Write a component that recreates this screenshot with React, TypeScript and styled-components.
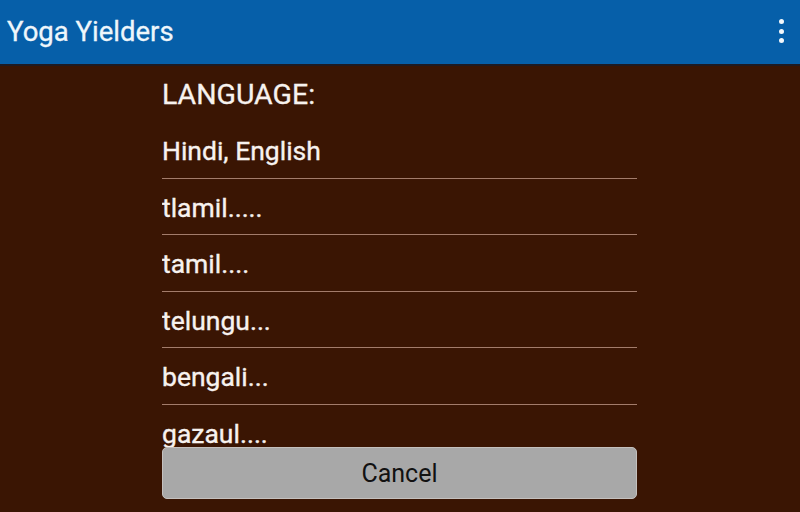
import styled, { createGlobalStyle } from "styled-components";

const languages = [
  "Hindi, English",
  "tlamil.....",
  "tamil....",
  "telungu...",
  "bengali...",
  "gazaul....",
];

const GlobalStyle = createGlobalStyle`
  html, body {
    margin: 0;
    padding: 0;
    background: #3a1503;
    font-family: Roboto, "Noto Sans", sans-serif;
  }
`;

const Screen = styled.div`
  width: 800px;
  height: 512px;
  display: flex;
  flex-direction: column;
  background: #3a1503;
  overflow: hidden;
`;

const AppBar = styled.header`
  height: 64px;
  flex-shrink: 0;
  background: #065fa9;
  box-shadow: 0 2px 0 #1e1a22;
  display: flex;
  align-items: center;
  justify-content: space-between;
  padding: 0 16px 0 7px;
  position: relative;
  z-index: 1;
`;

const Title = styled.h1`
  margin: 0 0 2px;
  font-size: 27.5px;
  font-weight: 400;
  color: #eef6fb;
  -webkit-text-stroke: 0.3px #eef6fb;
`;

const OverflowMenu = styled.div`
  display: flex;
  flex-direction: column;
  gap: 4.5px;
  margin-bottom: 2px;
`;

const Dot = styled.span`
  width: 5px;
  height: 5px;
  border-radius: 50%;
  background: #f2f7fb;
`;

const Panel = styled.main`
  width: 475px;
  margin-left: 162px;
  display: flex;
  flex-direction: column;
`;

const Heading = styled.div`
  height: 58px;
  padding-top: 2px;
  box-sizing: border-box;
  display: flex;
  align-items: center;
  font-size: 28.5px;
  color: #f7f2ef;
  -webkit-text-stroke: 0.3px #f7f2ef;
`;

const List = styled.ul`
  list-style: none;
  margin: 0;
  padding: 0;
  height: 325px;
  overflow: hidden;
`;

const Item = styled.li`
  height: 56.5px;
  display: flex;
  align-items: center;
  box-sizing: border-box;
  padding-top: 2px;
  font-size: 26.5px;
  color: #f7f2ef;
  -webkit-text-stroke: 0.35px #f7f2ef;
  border-bottom: 1.2px solid #a37c6b;
`;

const CancelButton = styled.button`
  height: 52px;
  margin: 0;
  border: 1px solid #c4c0be;
  border-radius: 5px;
  background: #a8a8a8;
  color: #111;
  font-family: Roboto, "Noto Sans", sans-serif;
  font-size: 25px;
  cursor: pointer;
`;

export default function App() {
  return (
    <Screen>
      <GlobalStyle />
      <AppBar>
        <Title>Yoga Yielders</Title>
        <OverflowMenu>
          <Dot />
          <Dot />
          <Dot />
        </OverflowMenu>
      </AppBar>
      <Panel>
        <Heading>LANGUAGE:</Heading>
        <List>
          {languages.map((name) => (
            <Item key={name}>{name}</Item>
          ))}
        </List>
        <CancelButton>Cancel</CancelButton>
      </Panel>
    </Screen>
  );
}
